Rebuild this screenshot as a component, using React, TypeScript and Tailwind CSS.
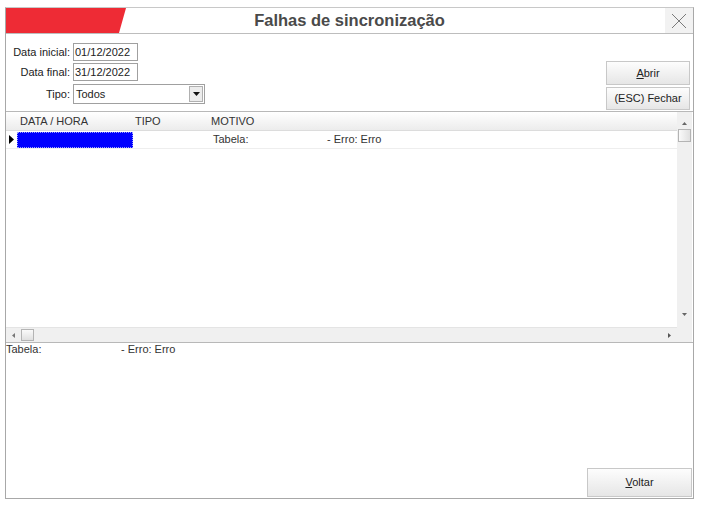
import React from 'react';

const rows = [{ tipo: '', tabela: 'Tabela:', erro: '- Erro: Erro' }];

function WinButton({ children, className = '' }: { children: React.ReactNode; className?: string }) {
  return (
    <button
      className={`flex items-center justify-center border border-[#c8c8c8] bg-gradient-to-b from-[#fdfdfd] to-[#e6e6e6] text-[11px] text-[#222] ${className}`}
    >
      {children}
    </button>
  );
}

export default function App() {
  return (
    <div className="w-[705px] h-[505px] bg-white pt-[7px] pl-[5px] font-['Liberation_Sans',Arial,sans-serif] text-[#222]">
      <div className="w-[689px] h-[492px] border border-[#a8a8a8] border-t-[#c8c8c8] flex flex-col">
        {/* title bar */}
        <div className="h-[26px] grid grid-cols-[120px_1fr_120px] border-b border-[#bdbdbd]">
          <div className="bg-[#ee2b35] [clip-path:polygon(0_0,100%_0,calc(100%-7px)_100%,0_100%)]" />
          <div className="flex items-center justify-center text-[16.5px] font-bold text-[#4a4a4a]">
            Falhas de sincronização
          </div>
          <div className="flex justify-end">
            <div className="w-[28px] h-full bg-[#f2f2f2] flex items-center justify-center">
              <svg width="16" height="16" viewBox="0 0 16 16">
                <path d="M1 1 L15 15 M15 1 L1 15" stroke="#7a7a7a" strokeWidth="1" fill="none" />
              </svg>
            </div>
          </div>
        </div>

        {/* filters */}
        <div className="h-[77px] flex justify-between text-[11px]">
          <div className="pt-[9px] grid grid-cols-[64px_auto] gap-x-[3px] auto-rows-min items-center">
            <span className="text-right">Data inicial:</span>
            <div className="w-[65px] h-[18px] border border-[#a0a0a0] px-[1px] leading-[16px]">01/12/2022</div>
            <span className="text-right mt-[2px]">Data final:</span>
            <div className="w-[65px] h-[18px] mt-[2px] border border-[#a0a0a0] px-[1px] leading-[16px]">31/12/2022</div>
            <span className="text-right mt-[3px]">Tipo:</span>
            <div className="w-[132px] h-[20px] mt-[3px] border border-[#a0a0a0] flex items-center">
              <span className="flex-1 pl-[2px]">Todos</span>
              <div className="w-[14px] h-[16px] mr-[1px] border border-[#b0b0b0] bg-[#ececec] flex items-center justify-center">
                <svg width="7" height="4" viewBox="0 0 7 4">
                  <path d="M0 0 H7 L3.5 4 Z" fill="#111" />
                </svg>
              </div>
            </div>
          </div>
          <div className="pt-[27px] pr-[3px] flex flex-col gap-[2px]">
            <WinButton className="w-[84px] h-[24px]">
              <span>
                <u>A</u>brir
              </span>
            </WinButton>
            <WinButton className="w-[84px] h-[23px]">(ESC) Fechar</WinButton>
          </div>
        </div>

        {/* grid */}
        <div className="h-[232px] border-t border-b border-[#b8b8b8] flex text-[11px]">
          <div className="flex-1 flex flex-col">
            <div className="flex-1 flex flex-col">
              <div className="h-[19px] flex items-center bg-gradient-to-b from-[#ffffff] to-[#ececec] border-b border-[#dcdcdc] text-[#333]">
                <div className="w-[11px]" />
                <div className="w-[116px] pl-[3px]">DATA / HORA</div>
                <div className="w-[76px] pl-[2px]">TIPO</div>
                <div className="flex-1 pl-[2px]">MOTIVO</div>
              </div>
              {rows.map((r, i) => (
                <div key={i} className="h-[18px] flex items-center border-b border-[#eeeeee] text-[#333]">
                  <div className="w-[11px] flex items-center justify-center">
                    <svg width="5" height="9" viewBox="0 0 5 9">
                      <path d="M0 0 L5 4.5 L0 9 Z" fill="#000" />
                    </svg>
                  </div>
                  <div className="w-[116px] h-[16px] bg-[#0000ff] border border-dotted border-[#9aa0ff]" />
                  <div className="w-[76px] pl-[2px]">{r.tipo}</div>
                  <div className="w-[118px] pl-[4px]">{r.tabela}</div>
                  <div className="flex-1">{r.erro}</div>
                </div>
              ))}
            </div>
            {/* horizontal scrollbar */}
            <div className="h-[15px] bg-[#f0f0f0] border-t border-[#e4e4e4] flex items-center">
              <div className="w-[15px] flex items-center justify-center">
                <svg width="3" height="5" viewBox="0 0 3 5">
                  <path d="M3 0 L0 2.5 L3 5 Z" fill="#777" />
                </svg>
              </div>
              <div className="w-[13px] h-[12px] border border-[#b4b4b4] bg-gradient-to-b from-[#fafafa] to-[#e0e0e0]" />
              <div className="flex-1" />
              <div className="w-[15px] flex items-center justify-center">
                <svg width="3" height="5" viewBox="0 0 3 5">
                  <path d="M0 0 L3 2.5 L0 5 Z" fill="#555" />
                </svg>
              </div>
            </div>
          </div>
          {/* vertical scrollbar */}
          <div className="w-[15px] mr-[1px] flex flex-col bg-[#f0f0f0]">
            <div className="h-[17px] flex items-end justify-center pb-[4px]">
              <svg width="5" height="3" viewBox="0 0 5 3">
                <path d="M0 3 L2.5 0 L5 3 Z" fill="#666" />
              </svg>
            </div>
            <div className="mx-[1px] h-[13px] border border-[#b4b4b4] bg-gradient-to-r from-[#fafafa] to-[#e0e0e0]" />
            <div className="flex-1" />
            <div className="h-[18px] flex items-start justify-center pt-[4px]">
              <svg width="5" height="3" viewBox="0 0 5 3">
                <path d="M0 0 L5 0 L2.5 3 Z" fill="#666" />
              </svg>
            </div>
            <div className="h-[15px] bg-[#f0f0f0]" />
          </div>
        </div>

        {/* memo */}
        <div className="flex-1 flex flex-col text-[11px] text-[#333]">
          <div className="flex leading-[13px]">
            <span className="w-[115px]">Tabela:</span>
            <span>- Erro: Erro</span>
          </div>
          <div className="flex-1" />
          <div className="flex justify-end pr-[1px] pb-[1px]">
            <WinButton className="w-[105px] h-[29px]">
              <span>
                <u>V</u>oltar
              </span>
            </WinButton>
          </div>
        </div>
      </div>
    </div>
  );
}
